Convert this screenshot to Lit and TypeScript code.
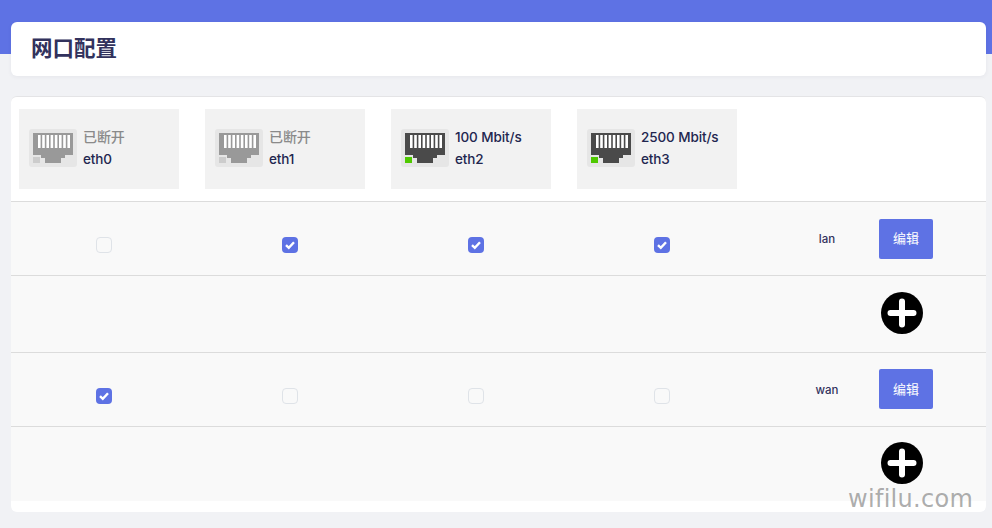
import { LitElement, html, css, svg } from "lit";
import { customElement } from "lit/decorators.js";

const ports = [
  { status: "已断开", name: "eth0", up: false },
  { status: "已断开", name: "eth1", up: false },
  { status: "100 Mbit/s", name: "eth2", up: true },
  { status: "2500 Mbit/s", name: "eth3", up: true },
];
const stripes = [0, 1, 2, 3, 4, 5, 6, 7].map((i) => 9 + i * 4.2);

const plug = (up: boolean) => svg`
  <svg class="plug" width="48" height="38" viewBox="0 0 48 38">
    <rect width="48" height="38" rx="3" fill="#e6e6e6"/>
    <polygon points="4,4 44,4 44,26 36,26 36,29 32,29 32,34 16,34 16,29 12,29 12,26 4,26" fill="${up ? "#4a4a4a" : "#999999"}"/>
    ${stripes.map((x) => svg`<rect x="${x}" y="6" width="2.6" height="13" fill="#ffffff"/>`)}
    <rect x="4" y="28" width="7" height="6" fill="${up ? "#4fc900" : "#cccccc"}"/>
  </svg>`;

const check = svg`<svg width="16" height="16" viewBox="0 0 16 16"><path d="M4 8.2 L6.8 10.8 L12 5.2" fill="none" stroke="#fff" stroke-width="2.4"/></svg>`;

const plus = svg`<svg width="42" height="42" viewBox="0 0 42 42">
  <circle cx="21" cy="21" r="21" fill="#000"/>
  <path d="M21 9.5 V32.5 M9.5 21 H32.5" stroke="#fff" stroke-width="6" stroke-linecap="round" fill="none"/>
</svg>`;

@customElement("app-root")
export class AppRoot extends LitElement {
  static styles = css`
    :host {
      display: block;
      height: 528px;
      box-sizing: border-box;
      padding: 22px 6px 16px 11px;
      overflow: hidden;
      position: relative;
      background: linear-gradient(#5e72e4 54px, #f1f2f5 54px);
      font-family: Inter, "Noto Sans CJK SC", sans-serif;
      color: #32325d;
    }
    .title-card {
      height: 54px;
      background: #fff;
      border-radius: 6px;
      box-shadow: 0 1px 4px rgba(50, 50, 93, 0.06);
      display: flex;
      align-items: center;
      padding: 0 0 6px 20px;
      box-sizing: border-box;
      font-size: 21.5px;
      font-weight: 700;
      margin-bottom: 20px;
    }
    .card {
      height: 416px;
      background: #fff;
      border-radius: 6px;
      border-top: 1px solid #e4e4e6;
      box-sizing: border-box;
      overflow: hidden;
    }
    .ports {
      display: flex;
      gap: 26px;
      height: 104px;
      padding: 12px 8px;
      box-sizing: border-box;
    }
    .tile {
      width: 160px;
      height: 80px;
      background: #f2f2f2;
      display: flex;
      align-items: center;
      padding: 0 10px 2px;
      box-sizing: border-box;
      gap: 6px;
    }
    .plug { display: block; flex: none; }
    .tile-text {
      display: flex;
      flex-direction: column;
      gap: 4px;
      font-size: 13.5px;
      font-weight: 500;
      line-height: 18px;
      color: #22264f;
      letter-spacing: -0.1px;
    }
    .off .status { color: #8a8a8a; font-size: 14px; }
    .row {
      display: grid;
      grid-template-columns: repeat(4, 186px) 124px 107px;
      background: #f9f9f9;
      border-top: 1px solid #dcdcdc;
      box-sizing: border-box;
      align-items: center;
    }
    .row.cfg { height: 74px; }
    .row.add { height: 77px; }
    .row.add.last { height: 75px; }
    .cell-check {
      display: flex;
      justify-content: center;
      padding-top: 12px;
    }
    .box {
      width: 16px;
      height: 16px;
      border-radius: 4px;
      box-sizing: border-box;
      border: 1px solid #dfe3e8;
      background: #f9f9f9;
      display: block;
    }
    .box.on {
      background: #5e72e4;
      border: none;
    }
    .box svg { display: block; }
    .net {
      text-align: center;
      font-size: 11.5px;
      font-weight: 500;
      padding-left: 20px;
    }
    .edit {
      display: block;
      width: 54px;
      height: 40px;
      background: #5e72e4;
      color: #fff;
      border: none;
      border-radius: 2px;
      font: 13px Inter, "Noto Sans CJK SC", sans-serif;
      padding: 0 0 2px;
    }
    .wan .edit { margin-bottom: 1px; }
    .add-btn {
      grid-column: 6;
      display: block;
      margin: 0 0 2px 2px;
      height: 42px;
    }
    .watermark {
      position: absolute;
      left: 848px;
      top: 483px;
      font-family: "DejaVu Sans", sans-serif;
      font-size: 24px;
      line-height: 32px;
      letter-spacing: 0.3px;
      color: rgba(120, 120, 120, 0.62);
    }
  `;

  private cfgRow(name: string, on: boolean[]) {
    return html`<div class="row cfg ${name}">
      ${on.map(
        (v) => html`<div class="cell-check"><span class="box ${v ? "on" : ""}">${v ? check : ""}</span></div>`
      )}
      <div class="net">${name}</div>
      <div><button class="edit">编辑</button></div>
    </div>`;
  }

  render() {
    return html`
      <div class="title-card">网口配置</div>
      <div class="card">
        <div class="ports">
          ${ports.map(
            (p) => html`<div class="tile ${p.up ? "" : "off"}">
              ${plug(p.up)}
              <div class="tile-text"><span class="status">${p.status}</span><span>${p.name}</span></div>
            </div>`
          )}
        </div>
        ${this.cfgRow("lan", [false, true, true, true])}
        <div class="row add"><div class="add-btn">${plus}</div></div>
        ${this.cfgRow("wan", [true, false, false, false])}
        <div class="row add last"><div class="add-btn">${plus}</div></div>
      </div>
      <div class="watermark">wifilu.com</div>
    `;
  }
}
